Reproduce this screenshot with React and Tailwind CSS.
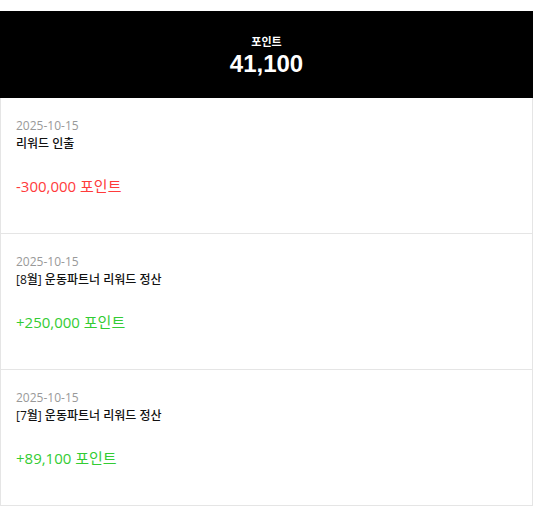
const history = [
  { date: '2025-10-15', title: '리워드 인출', amount: '-300,000 포인트', plus: false },
  { date: '2025-10-15', title: '[8월] 운동파트너 리워드 정산', amount: '+250,000 포인트', plus: true },
  { date: '2025-10-15', title: '[7월] 운동파트너 리워드 정산', amount: '+89,100 포인트', plus: true },
];

export default function App() {
  return (
    <div className="h-[509px] overflow-hidden bg-white pt-[11px] font-['Open_Sans','Noto_Sans_CJK_KR',sans-serif]">
      {/* Summary */}
      <div className="flex h-[87px] flex-col items-center justify-center bg-black text-white">
        <div className="mt-[2px] text-[11px] font-bold leading-4">포인트</div>
        <div className="font-[family-name:'Liberation_Sans',Arial,sans-serif] text-[24px] font-bold leading-7">41,100</div>
      </div>

      {/* List */}
      <div className="border-x border-[#e5e5e5]">
        {history.map(function (h, idx) {
          return (
            <div key={idx} className="h-[136px] border-b border-[#e5e5e5] px-[15px] pt-[18px]">
              <div className="text-[12px] leading-5 text-[#999999]">{h.date}</div>
              <div className="text-[12px] font-medium leading-4 text-[#111111]">{h.title}</div>
              <div className={'mt-[22px] text-[15px] leading-6 ' + (h.plus ? 'text-[#33cc33]' : 'text-[#ff3b3b]')}>{h.amount}</div>
            </div>
          );
        })}
      </div>
    </div>
  );
}
